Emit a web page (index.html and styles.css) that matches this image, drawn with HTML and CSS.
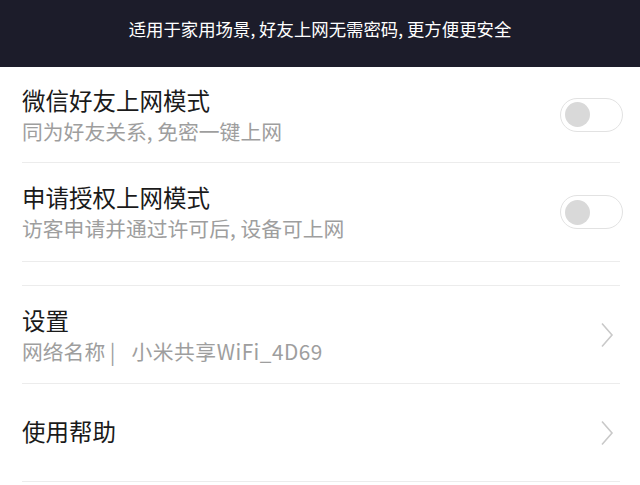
FILE: index.html
```html
<!DOCTYPE html>
<html>
  <head>
    <meta charset="utf-8">
    <title>访客网络</title>
    <link rel="stylesheet" href="styles.css">
  </head>
  <body>
    <div class="top-bar">适用于家用场景, 好友上网无需密码, 更方便更安全</div>

    <div class="list">
      <div class="row row-first">
        <div class="row-text">
          <div class="row-title">微信好友上网模式</div>
          <div class="row-sub">同为好友关系, 免密一键上网</div>
        </div>
        <div class="switch"><div class="knob"></div></div>
      </div>

      <div class="row row-second">
        <div class="row-text">
          <div class="row-title">申请授权上网模式</div>
          <div class="row-sub">访客申请并通过许可后, 设备可上网</div>
        </div>
        <div class="switch"><div class="knob"></div></div>
      </div>

      <div class="spacer"></div>

      <div class="row">
        <div class="row-text">
          <div class="row-title">设置</div>
          <div class="row-sub">网络名称 |<span class="ssid">小米共享WiFi_4D69</span></div>
        </div>
        <svg class="chevron" width="14" height="26" viewBox="0 0 14 26">
          <path d="M2 1.5 L12 13 L2 24.5" fill="none" stroke="#c9c9c9" stroke-width="1.6"/>
        </svg>
      </div>

      <div class="row row-last">
        <div class="row-text">
          <div class="row-title">使用帮助</div>
        </div>
        <svg class="chevron" width="14" height="26" viewBox="0 0 14 26">
          <path d="M2 1.5 L12 13 L2 24.5" fill="none" stroke="#c9c9c9" stroke-width="1.6"/>
        </svg>
      </div>
    </div>
  </body>
</html>
```

FILE: styles.css
```css
* {
  box-sizing: border-box;
  margin: 0;
  padding: 0;
}

body {
  font-family: "Noto Sans CJK SC", "Noto Sans", sans-serif;
  background-color: #ffffff;
  color: #1a1a1a;
  width: 640px;
  height: 485px;
  overflow: hidden;
}

/* Barra superior oscura */
.top-bar {
  height: 67px;
  background-color: #1c1c2a;
  color: #ffffff;
  font-size: 17.4px;
  line-height: 20px;
  text-align: center;
  padding-top: 19px;
}

.list {
  padding: 0 20px 0 22px;
}

.row {
  display: flex;
  align-items: center;
  justify-content: space-between;
  height: 98px;
  border-bottom: 1px solid #ececec;
}

.row-first {
  height: 96px;
}

.row-second {
  height: 99px;
}

.row-last .row-title {
  margin-top: -3px;
}

.spacer {
  height: 24px;
  border-bottom: 1px solid #ececec;
}

.row-title {
  font-size: 23.5px;
  line-height: 30px;
  color: #1a1a1a;
}

.row-sub {
  font-size: 20.8px;
  line-height: 28px;
  color: #9e9e9e;
  margin-top: 2px;
}

.ssid {
  margin-left: 16px;
  letter-spacing: 0.5px;
}

.switch {
  width: 63px;
  height: 34px;
  border: 1.5px solid #e2e2e2;
  border-radius: 17px;
  background-color: #ffffff;
  display: flex;
  align-items: center;
  padding-left: 4px;
  margin-right: -3px;
}

.knob {
  width: 25px;
  height: 25px;
  border-radius: 50%;
  background-color: #d9d9d9;
}

.chevron {
  margin-right: 6px;
}
```
